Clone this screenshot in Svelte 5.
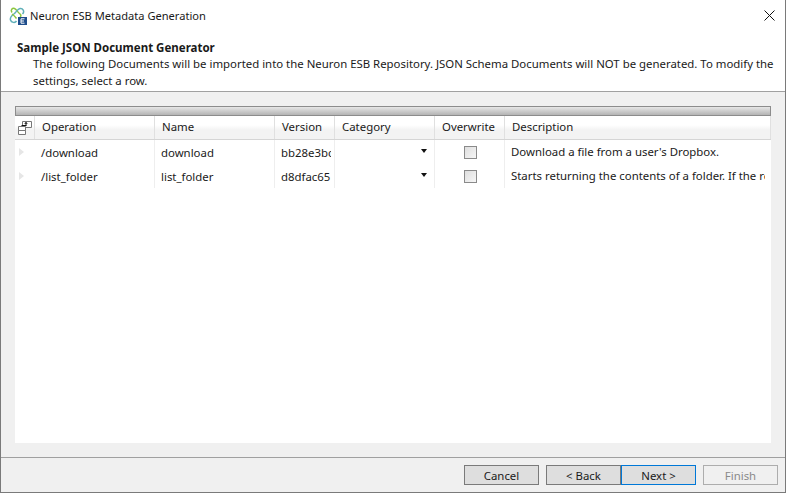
<script>
  const columns = ['Operation', 'Name', 'Version', 'Category', 'Overwrite', 'Description'];
  const rows = [
    { op: '/download', name: 'download', version: 'bb28e3bc9a', desc: "Download a file from a user's Dropbox." },
    { op: '/list_folder', name: 'list_folder', version: 'd8dfac65', desc: 'Starts returning the contents of a folder. If the result is truncated' }
  ];
</script>

<div class="window">
  <div class="titlebar">
    <svg class="logo" viewBox="0 0 18 18" width="18" height="18" aria-hidden="true">
      <path d="M3 5.500C1 3 3.500 .8 5.500 1.500 7.500 2.200 8.500 5 10.500 6.500 12 7.500 12.500 9 11 10" fill="none" stroke="#8cc63f" stroke-width="1.500"/>
      <path d="M13.500 7C16 4.500 13.800 1 11 1.500 9 1.900 7.500 4.500 5.500 6.500 3.500 8 .5 10 1.500 13c.8 2.500 4.500 3.500 6 1" fill="none" stroke="#5fb0b8" stroke-width="1.500"/>
      <path d="M3 7c1.500 1 3 2.500 4.500 4.500" fill="none" stroke="#8cc63f" stroke-width="1.500"/>
      <rect x="9" y="10" width="9" height="8" fill="#1f4e8c"/>
      <path d="M15.500 11.800h-3.500v4.400h3.500M12 14h3" stroke="#fff" stroke-width="1" fill="none"/>
    </svg>
    <span class="title">Neuron ESB Metadata Generation</span>
    <svg class="close" viewBox="0 0 11 11" width="11" height="11" aria-hidden="true">
      <path d="M.5.5l10 10M10.500.5l-10 10" stroke="#111" stroke-width="1" fill="none"/>
    </svg>
  </div>

  <header class="head">
    <h1>Sample JSON Document Generator</h1>
    <p>The following Documents will be imported into the Neuron ESB Repository. JSON Schema Documents will NOT be generated. To modify the settings, select a row.</p>
  </header>

  <main class="body">
    <div class="grid">
      <div class="groupbar"></div>
      <div class="row headrow">
        <div class="cell rowhead">
          <svg viewBox="0 0 14 14" width="14" height="14" aria-hidden="true">
            <path d="M4.500 .5h9v6h-9z" fill="#fff" stroke="#777"/>
            <path d="M.5 5.500h7v4h-7zM.5 9.500h7v4h-7z" fill="#fff" stroke="#777"/>
            <path d="M3.500 4.500h5M8 1.500v3M6.800 3L8 1.300 9.200 3" stroke="#111" fill="none"/>
          </svg>
        </div>
        {#each columns as col}
          <div class="cell">{col}</div>
        {/each}
      </div>
      {#each rows as row}
        <div class="row datarow">
          <div class="cell rowhead"><span class="marker"></span></div>
          <div class="cell">{row.op}</div>
          <div class="cell">{row.name}</div>
          <div class="cell version"><span class="clip">{row.version}</span></div>
          <div class="cell combo"><span class="arrow"></span></div>
          <div class="cell check"><span class="box"></span></div>
          <div class="cell desc"><span class="clip">{row.desc}</span></div>
        </div>
      {/each}
    </div>
  </main>

  <footer class="foot">
    <button class="btn">Cancel</button>
    <div class="pair">
      <button class="btn">&lt; Back</button>
      <button class="btn primary">Next &gt;</button>
    </div>
    <button class="btn" disabled>Finish</button>
  </footer>
</div>

<style>
  :global(body) { margin: 0; }
  .window {
    width: 786px;
    height: 493px;
    box-sizing: border-box;
    display: flex;
    flex-direction: column;
    background: #f0f0f0;
    border: 1px solid #7a7a7a;
    border-top: none;
    font-family: "Noto Sans", "Open Sans", sans-serif;
    font-size: 11.4px;
    color: #1a1a1a;
    overflow: hidden;
  }
  .titlebar {
    height: 31px;
    flex-shrink: 0;
    display: flex;
    align-items: center;
    padding: 0 10px 0 8px;
    gap: 3px;
    background: #fff;
  }
  .title { flex: 1; font-size: 11.1px; }
  .logo { flex-shrink: 0; }
  .head {
    height: 61px;
    box-sizing: border-box;
    flex-shrink: 0;
    background: #fff;
    border-bottom: 1px solid #a0a0a0;
    padding: 9px 0 0 16px;
  }
  h1 { margin: 0; font-size: 11.5px; font-weight: 700; line-height: 15px; }
  p { margin: 0 0 0 16px; line-height: 17px; }
  .body { flex: 1; padding: 14px 14px 14px; min-height: 0; }
  .grid { height: 100%; background: #fff; display: flex; flex-direction: column; }
  .groupbar {
    height: 10px;
    box-sizing: border-box;
    flex-shrink: 0;
    border: 1px solid #8c8c8c;
    background: linear-gradient(#e6e6e6, #b4b4b4);
  }
  .row {
    display: grid;
    grid-template-columns: 20px 120px 120px 60px 100px 70px 266px;
  }
  .headrow { height: 24px; box-sizing: border-box; border-bottom: 1px solid #d5d5d5; background: linear-gradient(#fff 40%, #f3f3f3 60%); }
  .headrow .cell { padding-left: 7px; border-right: 1px solid #e0e0e0; line-height: 22px; }
  .headrow .rowhead { padding: 1px 0 0 3px; display: flex; align-items: center; }
  .datarow { height: 24px; }
  .cell { box-sizing: border-box; overflow: hidden; white-space: nowrap; }
  .datarow .cell { padding-left: 6px; line-height: 25px; border-right: 1px solid #eee; }
  .datarow .rowhead { padding-left: 4px; display: flex; align-items: center; border-right: none; }
  .clip { display: block; overflow: hidden; }
  .datarow .version { padding-right: 3px; }
  .marker { width: 0; height: 0; border: 4px solid transparent; border-left: 5px solid #e6e6e6; border-right: none; }
  .datarow .combo { display: flex; align-items: center; justify-content: flex-end; padding-right: 7px; }
  .arrow { width: 0; height: 0; margin-bottom: 2px; border: 3.500px solid transparent; border-top: 4px solid #111; border-bottom: none; }
  .datarow .check { display: flex; align-items: center; justify-content: center; padding-left: 2px; }
  .box { width: 11px; height: 11px; border: 1px solid #8a8a8a; background: linear-gradient(135deg, #dedede, #f6f6f6); }
  .datarow .desc { line-height: 23px; padding-right: 6px; border-right: none; }
  .foot {
    height: 35px;
    flex-shrink: 0;
    box-sizing: border-box;
    border-top: 1px solid #a0a0a0;
    display: flex;
    align-items: flex-start;
    justify-content: flex-end;
    gap: 7px;
    padding: 7px 7px 0 0;
  }
  .pair { display: flex; }
  .btn {
    width: 75px;
    height: 20px;
    padding: 0;
    box-sizing: border-box;
    background: #dedede;
    border: 1px solid #7a7a7a;
    font: inherit;
    color: #1a1a1a;
  }
  .primary { border-color: #0078d7; }
  .btn:disabled { background: #f0f0f0; border-color: #adadad; color: #8a8a8a; }
</style>
